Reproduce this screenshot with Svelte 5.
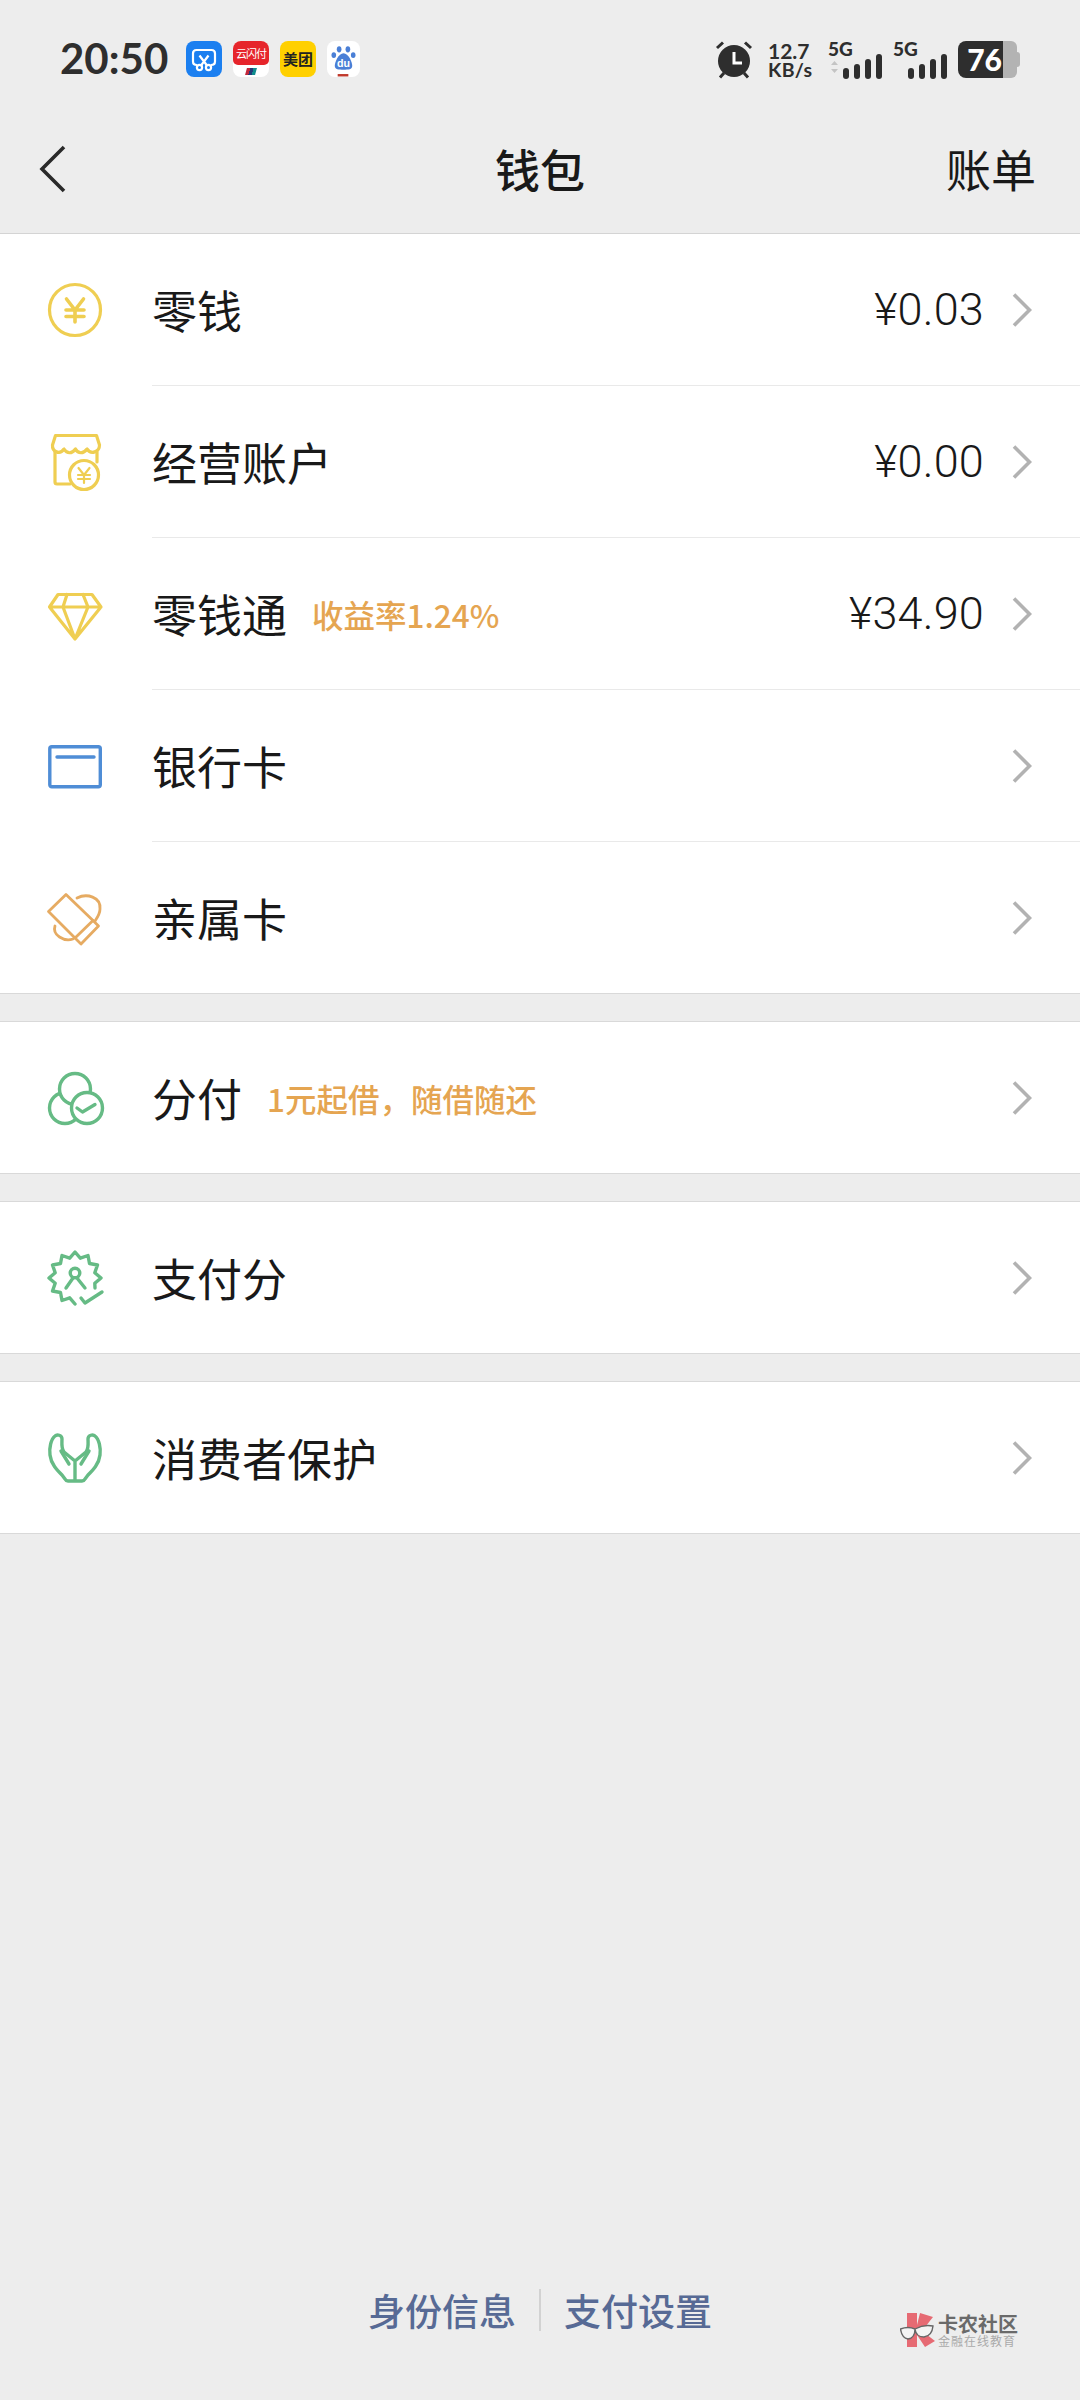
<script>
  const groups = [
    [
      { icon: "coin", label: "零钱", amount: "¥0.03" },
      { icon: "shop", label: "经营账户", amount: "¥0.00" },
      { icon: "diamond", label: "零钱通", tag: "收益率1.24%", amount: "¥34.90" },
      { icon: "card", label: "银行卡" },
      { icon: "family", label: "亲属卡" }
    ],
    [{ icon: "fen", label: "分付", tag: "1元起借，随借随还" }],
    [{ icon: "score", label: "支付分" }],
    [{ icon: "hands", label: "消费者保护" }]
  ];

  // badge outline: spikes every 30deg, open at the lower right for the tick
  const badge = [];
  for (let a = 180; a <= 465; a += 15) {
    const r = a % 30 === 0 ? 26 : 20.5;
    const t = (a * Math.PI) / 180;
    badge.push(`${(30 + r * Math.sin(t)).toFixed(1)},${(30 - r * Math.cos(t)).toFixed(1)}`);
  }
  badge.push("50,40");
  const badgePoints = badge.join(" ");
</script>

{#snippet bars(x)}
  <rect x={x} y="14" width="6" height="11" rx="3" />
  <rect x={x + 11} y="10" width="6" height="15" rx="3" />
  <rect x={x + 22} y="5" width="6" height="20" rx="3" />
  <rect x={x + 33} y="0" width="6" height="25" rx="3" />
{/snippet}

{#snippet rowIcon(name)}
  <svg class="row-icon {name}" viewBox="0 0 60 60" xmlns="http://www.w3.org/2000/svg">
    {#if name === "coin"}
      <circle cx="30" cy="30" r="25.5" />
      <path class="bold" d="M21.5 19L30 30L38.5 19M21 30H39M21 36.5H39M30 30V42" />
    {:else if name === "shop"}
      <path d="M10.5 3.5H51.5L54.5 13C54.5 20 46 23 42 17C38.5 22 33 22 30.5 17C27 22 22 22 19 17C15 23 7 20 7.5 13Z" />
      <path d="M10 20V50Q10 52 12 52H25M52 20V30" />
      <circle cx="39" cy="43" r="14.5" />
      <path class="thin" d="M33.5 36L39 43L44.5 36M33 43H45M33 47H45M39 43V51" />
    {:else if name === "diamond"}
      <path d="M13 10.5H47L56 23L30 55L4.5 23ZM4.5 23H56M22 10.5L18 23L30 55L43 23L38 10.5" />
    {:else if name === "card"}
      <rect x="4.8" y="10.8" width="50.5" height="40" rx="2" />
      <path d="M12 21H49" />
    {:else if name === "family"}
      <path d="M21 6.5L3.5 23.5L30 50L48 32.5Z" />
      <path d="M48 32.5L53.5 38L36 56L30 50" />
      <path d="M32 10C42 5 56 9 55 21C55 26 52 30 50 33M10 38C7 47 19 54 28 51" />
    {:else if name === "fen"}
      <circle cx="20" cy="40" r="15.5" />
      <circle cx="30" cy="21" r="15.5" />
      <circle cx="42" cy="40" r="15.5" />
      <path d="M32 40L37.5 44L50 36.5" />
    {:else if name === "score"}
      <polyline points={badgePoints} />
      <circle cx="30" cy="25" r="4.8" />
      <path d="M21 40L28 30M40 40L32 30M36 50L40 55L57 44" />
    {:else}
      <path d="M30 33L19 24C16 20 17 14 17 11C17 7 12 6 10 8C6 11 4 20 5 27C6 36 12 42 17 47L20 51Q21 53 23 53H37Q39 53 40 51L43 47C48 42 54 36 55 27C56 20 54 11 50 8C48 6 43 7 43 11C43 14 44 20 41 24L30 33V53" />
      <path d="M16 23L24 36M44 23L36 36" />
    {/if}
  </svg>
{/snippet}

<div class="page">
  <div class="status">
    <span class="time">20:50</span>
    <div class="apps">
      <span class="app blue">
        <svg viewBox="0 0 36 36" xmlns="http://www.w3.org/2000/svg">
          <path d="M11 24Q7 24 7 20.5V12.5Q7 9 10.5 9H25.5Q29 9 29 12.5V20.5Q29 24 25 24" />
          <path d="M13.5 14.5L21 24.5M22.5 14.5L15 24.5" />
          <circle cx="13.5" cy="26.5" r="2.6" />
          <circle cx="22.5" cy="26.5" r="2.6" />
        </svg>
      </span>
      <span class="app red">
        <span class="red-top"><b>云闪付</b></span>
        <span class="unionpay"></span>
      </span>
      <span class="app yellow">美团</span>
      <span class="app paw">
        <svg viewBox="0 0 34 36" xmlns="http://www.w3.org/2000/svg">
          <ellipse cx="12.5" cy="8" rx="2.4" ry="3.2" />
          <ellipse cx="21.5" cy="8" rx="2.4" ry="3.2" />
          <ellipse cx="7" cy="14" rx="2.4" ry="3" />
          <ellipse cx="27" cy="14" rx="2.4" ry="3" />
          <path d="M17 12C22 12 26 21 26 25C26 29 22 29 17 29C12 29 8 29 8 25C8 21 12 12 17 12Z" />
          <text x="17" y="26.5" text-anchor="middle">du</text>
          <rect class="dash" x="11" y="33.5" width="11" height="2.5" />
        </svg>
      </span>
    </div>
    <div class="sys">
      <svg class="alarm" viewBox="0 0 38 38" xmlns="http://www.w3.org/2000/svg">
        <circle cx="19" cy="20" r="16" />
        <path class="ear" d="M2 7L8 1.5M36 7L30 1.5M5 36.5L9 32M33 36.5L29 32" />
        <path class="hand" d="M19 11V22H27" />
      </svg>
      <div class="speed"><span>12.7</span><span>KB/s</span></div>
      <div class="sim first">
        <span class="net">5G</span>
        <svg viewBox="0 0 54 25" xmlns="http://www.w3.org/2000/svg">
          <path class="updown" d="M3 11L6.5 7L10 11ZM3 15L6.5 19L10 15Z" />
          {@render bars(15)}
        </svg>
      </div>
      <div class="sim">
        <span class="net">5G</span>
        <svg viewBox="0 0 54 25" xmlns="http://www.w3.org/2000/svg">
          {@render bars(15)}
        </svg>
      </div>
      <div class="battery">
        <span class="level">76</span>
        <span class="rest"></span>
        <span class="nub"></span>
      </div>
    </div>
  </div>

  <div class="nav">
    <svg class="back" viewBox="0 0 30 50" xmlns="http://www.w3.org/2000/svg">
      <path d="M26 3L4 25L26 47" />
    </svg>
    <span class="title">钱包</span>
    <span class="bill">账单</span>
  </div>

  {#each groups as group}
    <div class="group">
      {#each group as row}
        <div class="row">
          <span class="icon-box">{@render rowIcon(row.icon)}</span>
          <div class="row-main">
            <span class="label">{row.label}</span>
            {#if row.tag}<span class="tag">{row.tag}</span>{/if}
            <span class="spacer"></span>
            {#if row.amount}<span class="amount">{row.amount}</span>{/if}
            <svg class="arrow" viewBox="0 0 20 34" xmlns="http://www.w3.org/2000/svg">
              <path d="M2 1.5L17.5 17L2 32.5" />
            </svg>
          </div>
        </div>
      {/each}
    </div>
  {/each}

  <div class="footer">
    <span>身份信息</span>
    <span class="sep"></span>
    <span>支付设置</span>
  </div>

  <div class="watermark">
    <svg viewBox="0 0 35 34" xmlns="http://www.w3.org/2000/svg">
      <path class="k" d="M7 0H17V12L20 0L33 4L22 18L35 28L25 34L17 22V34H7Z" />
      <path class="glass" d="M0.5 16Q8 13 15 16Q15 25 8 26Q2 25 0.5 16ZM15 16Q24 11 33 13Q32 23 24 24Q16 24 15 16Z" />
    </svg>
    <div class="wm-text">
      <b>卡农社区</b>
      <span>金融在线教育</span>
    </div>
  </div>
</div>

<style>
  :global(body) {
    background: #ededed;
  }
  .page {
    position: relative;
    display: flex;
    flex-direction: column;
    width: 1080px;
    height: 2400px;
    overflow: hidden;
    background: #ededed;
    font-family: "Noto Sans CJK SC", sans-serif;
    color: #191919;
  }

  .status {
    display: flex;
    align-items: flex-start;
    height: 110px;
    padding: 41px 60px 0;
    box-sizing: border-box;
    color: #2e2e2e;
  }
  .time {
    font-family: Lato, sans-serif;
    font-size: 42px;
    font-weight: 700;
    line-height: 34px;
    width: 126px;
  }
  .apps {
    display: flex;
    gap: 11px;
  }
  .app {
    display: block;
    width: 36px;
    height: 36px;
    border-radius: 8px;
    overflow: hidden;
    position: relative;
  }
  .app svg {
    display: block;
    width: 100%;
    height: 100%;
  }
  .blue {
    background: #1b7ff0;
  }
  .blue svg {
    fill: none;
    stroke: #fff;
    stroke-width: 2.2;
  }
  .red {
    background: #fff;
  }
  .red-top {
    display: block;
    height: 24px;
    background: #e6252b;
    border-radius: 0 0 5px 5px;
    color: #fff;
    text-align: center;
    line-height: 20px;
  }
  .red-top b {
    font-size: 11px;
    font-weight: 400;
    letter-spacing: -1px;
  }
  .unionpay {
    display: block;
    width: 10px;
    height: 7px;
    margin: 3px auto 0;
    background: linear-gradient(90deg, #c2283b 33%, #233a78 33% 66%, #0f8b8d 66%);
    transform: skewX(-15deg);
  }
  .yellow {
    background: #ffd000;
    color: #222;
    font-size: 15px;
    font-weight: 700;
    line-height: 36px;
    text-align: center;
  }
  .paw {
    background: #fff;
    width: 33px;
  }
  .paw svg {
    fill: #4a7fd6;
  }
  .paw text {
    fill: #fff;
    font-family: "Liberation Sans", sans-serif;
    font-size: 11px;
    font-weight: 700;
  }
  .paw .dash {
    fill: #c0392b;
  }

  .sys {
    margin-left: auto;
    display: flex;
    align-items: flex-start;
  }
  .alarm {
    width: 38px;
    height: 38px;
    margin-right: 15px;
    fill: #2e2e2e;
  }
  .ear {
    fill: none;
    stroke: #2e2e2e;
    stroke-width: 3;
  }
  .hand {
    fill: none;
    stroke: #fff;
    stroke-width: 3;
  }
  .speed {
    display: flex;
    flex-direction: column;
    width: 60px;
    font-family: Lato, sans-serif;
    font-weight: 700;
    line-height: 19px;
  }
  .speed span:first-child {
    font-size: 21px;
  }
  .speed span:last-child {
    font-size: 19.5px;
    letter-spacing: 0.3px;
  }
  .sim {
    position: relative;
    width: 54px;
    height: 38px;
    margin-left: 11px;
  }
  .sim.first {
    margin-left: 0;
    margin-right: 11px;
  }
  .sim + .sim {
    margin-left: 0;
  }
  .sim svg {
    position: absolute;
    left: 0;
    bottom: 0;
    width: 54px;
    height: 25px;
    fill: #2e2e2e;
  }
  .net {
    display: block;
    font-family: Lato, sans-serif;
    font-size: 19px;
    font-weight: 900;
    line-height: 15px;
  }
  .updown {
    fill: #c4c4c4;
  }
  .battery {
    display: flex;
    align-items: center;
    margin-left: 11px;
    height: 37px;
  }
  .level {
    width: 45px;
    height: 37px;
    background: #2e2e2e;
    border-radius: 8px 0 0 8px;
    color: #fff;
    font-family: Lato, sans-serif;
    font-size: 30px;
    font-weight: 900;
    line-height: 37px;
    text-align: right;
    padding-right: 1px;
    box-sizing: border-box;
  }
  .rest {
    width: 14px;
    height: 37px;
    background: #b3b3b3;
    border-radius: 0 6px 6px 0;
  }
  .nub {
    width: 3px;
    height: 15px;
    background: #b3b3b3;
    border-radius: 0 3px 3px 0;
  }

  .nav {
    display: grid;
    grid-template-columns: 1fr auto 1fr;
    align-items: center;
    height: 124px;
    padding: 0 44px 6px 38px;
    box-sizing: border-box;
    border-bottom: 1px solid #d4d4d4;
  }
  .back {
    width: 30px;
    height: 50px;
    fill: none;
    stroke: #2a2a2a;
    stroke-width: 3.6;
  }
  .title {
    font-size: 45px;
    font-weight: 500;
    margin-right: -6px;
  }
  .bill {
    justify-self: end;
    font-size: 45px;
  }

  .group {
    background: #fff;
    border-bottom: 1px solid #d9d9d9;
  }
  .group + .group {
    margin-top: 27px;
    border-top: 1px solid #d9d9d9;
  }
  .row {
    display: flex;
    height: 152px;
  }
  .row:last-child {
    height: 151px;
  }
  .icon-box {
    width: 152px;
    flex: none;
    display: flex;
    align-items: center;
    padding-left: 45px;
    box-sizing: border-box;
  }
  .row-main {
    flex: 1;
    display: flex;
    align-items: center;
    padding-right: 48px;
    border-bottom: 1px solid #e9e9e9;
  }
  .row:last-child .row-main {
    border-bottom: none;
  }
  .label {
    font-size: 45px;
  }
  .tag {
    margin-left: 25px;
    font-size: 31.5px;
    font-weight: 500;
    color: #e5a551;
  }
  .spacer {
    flex: 1;
  }
  .amount {
    font-family: Roboto, sans-serif;
    font-size: 45px;
    font-weight: 300;
    letter-spacing: 0.2px;
    margin-right: 28px;
  }
  .arrow {
    width: 20px;
    height: 34px;
    fill: none;
    stroke: #b2b2b2;
    stroke-width: 3.6;
  }

  .row-icon {
    display: block;
    width: 60px;
    height: 60px;
    fill: none;
    stroke-width: 3.2;
    stroke-linejoin: round;
    stroke-linecap: round;
  }
  .coin,
  .shop,
  .diamond {
    stroke: #efce52;
  }
  .coin .bold {
    stroke-width: 3.6;
  }
  .shop .thin {
    stroke-width: 2.2;
  }
  .card {
    stroke: #4f8dd6;
    stroke-width: 3.4;
  }
  .family {
    stroke: #e6ab62;
    stroke-width: 2.8;
  }
  .fen,
  .score,
  .hands {
    stroke: #66bb85;
    stroke-width: 3.4;
  }
  .fen circle {
    fill: #fff;
  }

  .footer {
    margin-top: auto;
    margin-bottom: 67px;
    display: flex;
    align-items: center;
    justify-content: center;
    font-size: 37px;
    font-weight: 500;
    line-height: 46px;
    color: #576a95;
  }
  .sep {
    width: 2px;
    height: 42px;
    margin: 0 23px;
    background: #d2d2d2;
  }

  .watermark {
    position: absolute;
    left: 900px;
    top: 2313px;
    display: flex;
    gap: 3px;
  }
  .watermark svg {
    width: 35px;
    height: 34px;
  }
  .k {
    fill: #e66a73;
  }
  .glass {
    fill: #f3f3f3;
    stroke: #666;
    stroke-width: 1.4;
  }
  .wm-text {
    display: flex;
    flex-direction: column;
    color: #6a6a6a;
  }
  .wm-text b {
    font-size: 20px;
    line-height: 21px;
    font-weight: 700;
  }
  .wm-text span {
    font-size: 12px;
    line-height: 14px;
    letter-spacing: 1px;
    color: #aaa;
  }
</style>
